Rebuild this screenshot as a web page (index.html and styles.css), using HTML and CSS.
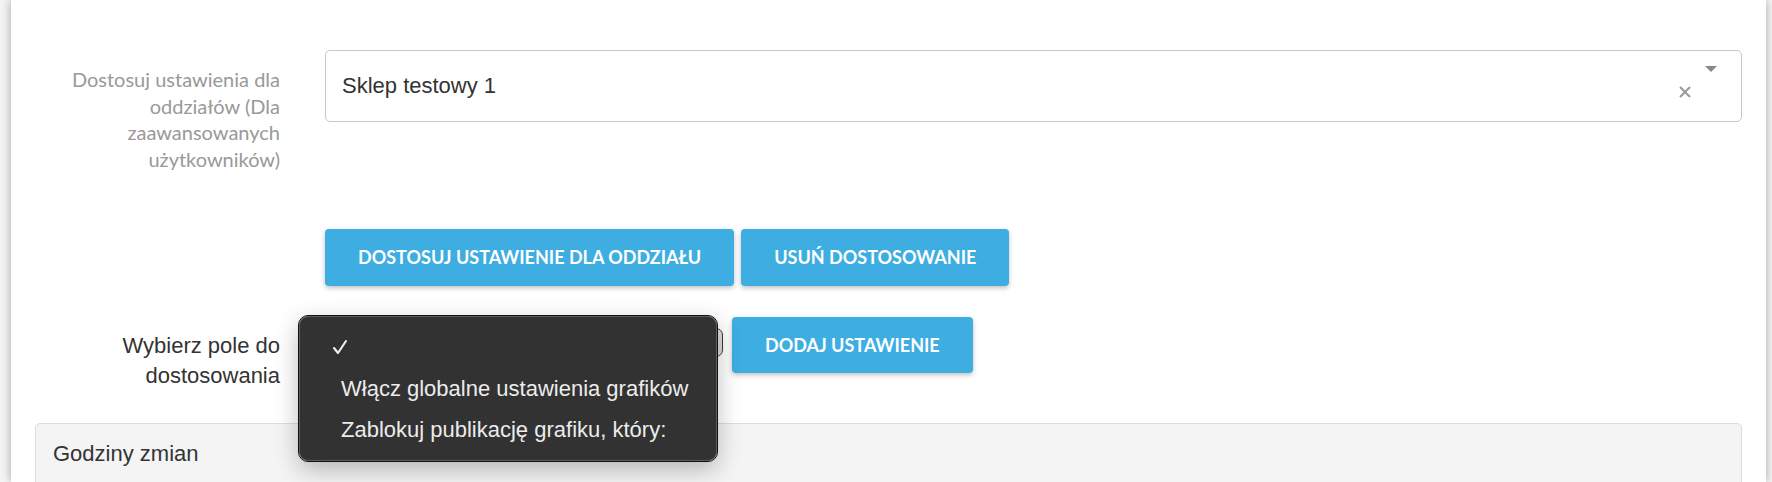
FILE: index.html
```html
<!DOCTYPE html>
<html lang="pl">
<head>
<meta charset="utf-8">
<title>Ustawienia oddziałów</title>
<link rel="stylesheet" href="styles.css">
</head>
<body>
<div class="page">
  <div class="card">
    <div class="form-row row-branch">
      <label class="label-muted">Dostosuj ustawienia dla oddziałów (Dla zaawansowanych użytkowników)</label>
      <div class="select2">
        <span class="select2-value">Sklep testowy 1</span>
        <span class="select2-clear">
          <svg width="12" height="12" viewBox="0 0 12 12"><path d="M1 1 L11 11 M11 1 L1 11" stroke="#999" stroke-width="2" fill="none"/></svg>
        </span>
        <span class="select2-arrow"></span>
      </div>
    </div>

    <div class="form-row row-buttons">
      <div></div>
      <div class="btn-group">
        <button class="btn">Dostosuj ustawienie dla oddziału</button>
        <button class="btn">Usuń dostosowanie</button>
      </div>
    </div>

    <div class="form-row row-field">
      <label class="label-dark">Wybierz pole do dostosowania</label>
      <div class="field-controls">
        <div class="select-wrap">
          <div class="native-select"></div>
          <div class="popup">
            <div class="popup-item">
              <svg class="check" width="16" height="16" viewBox="0 0 16 16"><path d="M2 9 L6 14 L14 2" stroke="#f0f0f0" stroke-width="2.1" fill="none" stroke-linecap="round" stroke-linejoin="round"/></svg>
            </div>
            <div class="popup-item">Włącz globalne ustawienia grafików</div>
            <div class="popup-item">Zablokuj publikację grafiku, który:</div>
          </div>
        </div>
        <button class="btn">Dodaj ustawienie</button>
      </div>
    </div>

    <div class="panel">
      <div class="panel-heading">Godziny zmian</div>
      <div class="panel-body"></div>
    </div>
  </div>
</div>
</body>
</html>
```

FILE: styles.css
```css
html, body {
  margin: 0;
  padding: 0;
  height: 100%;
  overflow: hidden;
}
body {
  background: #f4f4f4;
  font-family: "Liberation Sans", Arial, sans-serif;
  color: #333;
}
.page {
  padding: 0 6px 0 11px;
  height: 100%;
}
.card {
  background: #fff;
  height: 100%;
  box-shadow: 0 0 9px rgba(0, 0, 0, 0.32);
  padding: 50px 24px 0 24px;
  box-sizing: border-box;
}
.form-row {
  display: grid;
  grid-template-columns: 245px 1fr;
  column-gap: 45px;
}
.label-muted {
  font-family: Lato, "Liberation Sans", sans-serif;
  font-size: 20px;
  line-height: 26.67px;
  color: #999;
  text-align: right;
  padding-top: 16px;
}
.select2 {
  position: relative;
  height: 72px;
  border: 1px solid #c8c8c8;
  border-radius: 5px;
  box-sizing: border-box;
  display: flex;
  align-items: center;
  padding: 0 16px;
}
.select2-value {
  font-size: 22px;
  color: #333;
  flex: 1;
}
.select2-clear {
  display: flex;
  margin-right: 34px;
  margin-top: 11px;
}
.select2-arrow {
  position: absolute;
  right: 24px;
  top: 15px;
  width: 0;
  height: 0;
  border-left: 6px solid transparent;
  border-right: 6px solid transparent;
  border-top: 6px solid #888;
}
.row-buttons {
  margin-top: 56px;
}
.btn-group {
  display: flex;
  gap: 7px;
}
.btn {
  font-family: Lato, "Liberation Sans", sans-serif;
  font-weight: 700;
  font-size: 18px;
  text-transform: uppercase;
  color: #fff;
  background: #3dade2;
  border: none;
  border-radius: 4px;
  height: 57px;
  padding: 0 33px;
  box-shadow: 0 2px 5px rgba(0, 0, 0, 0.25);
  cursor: pointer;
}
.row-field {
  margin-top: 31px;
}
.label-dark {
  font-size: 22px;
  line-height: 30px;
  color: #333;
  text-align: right;
  padding-top: 14px;
}
.field-controls {
  display: flex;
  align-items: flex-start;
  gap: 9px;
}
.field-controls .btn {
  height: 56px;
}
.select-wrap {
  position: relative;
  margin-top: 11px;
}
.native-select {
  width: 398px;
  height: 29px;
  border: 1px solid #3a3a3a;
  border-radius: 7px;
  background: #dcdcdc;
  box-sizing: border-box;
}
.popup {
  position: absolute;
  left: -26px;
  top: -12px;
  width: 418px;
  box-sizing: border-box;
  background: #323232;
  border: 1px solid #5e5e5e;
  outline: 1px solid #111;
  border-radius: 9px;
  padding: 10px 0;
  box-shadow: 0 8px 24px rgba(0, 0, 0, 0.28);
  z-index: 5;
}
.popup-item {
  height: 41px;
  line-height: 41px;
  font-size: 22px;
  color: #ececec;
  padding-left: 41px;
  position: relative;
}
.check {
  position: absolute;
  left: 32px;
  top: 12px;
}
.panel {
  margin-top: 32px;
  border: 1px solid #ddd;
  border-radius: 5px 5px 0 0;
  background: #f4f4f4;
}
.panel-heading {
  font-size: 22px;
  line-height: 30px;
  padding: 15px 17px;
  color: #333;
}
.panel-body {
  height: 40px;
}
```
